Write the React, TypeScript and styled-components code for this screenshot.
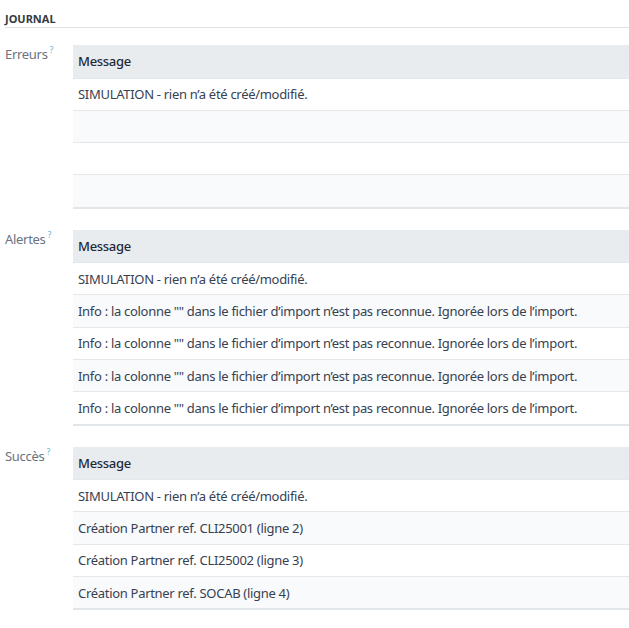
import React from "react";
import styled, { createGlobalStyle } from "styled-components";

const Global = createGlobalStyle`
  html, body {
    margin: 0;
    padding: 0;
    background: #ffffff;
  }
  body {
    font-family: "Noto Sans", "Liberation Sans", sans-serif;
    font-size: 13px;
    letter-spacing: -0.3px;
    color: #374151;
  }
`;

const Page = styled.div`
  padding: 12px 0 0 5px;
  width: 624px;
`;

const SectionTitle = styled.div`
  font-size: 11px;
  font-weight: 700;
  text-transform: uppercase;
  letter-spacing: 0;
  color: #343a40;
  line-height: 14px;
  padding-bottom: 1px;
  border-bottom: 1px solid #dee2e6;
  margin-bottom: 17px;
`;

const FieldRow = styled.div`
  display: grid;
  grid-template-columns: 68px 1fr;
  margin-bottom: 21px;
`;

const Label = styled.div`
  color: #6b7280;
  padding-top: 0;
  line-height: 18px;
`;

const Help = styled.sup`
  color: #5fb6d0;
  font-size: 9px;
  margin-left: 2px;
  vertical-align: 6px;
  line-height: 0;
`;

const Table = styled.table`
  width: 100%;
  border-collapse: collapse;
  border-bottom: 2px solid #e2e6ea;
`;

const HeadCell = styled.th`
  background: #e9ecef;
  height: 32.5px;
  padding: 0 5px;
  text-align: left;
  font-weight: 500;
  color: #1f2937;
`;

const Row = styled.tr`
  &:nth-child(even) td {
    background: #f9fafb;
  }
`;

const Cell = styled.td`
  height: 31.3px;
  padding: 0 5px;
  border-top: 1px solid #e5e7eb;
  color: #374151;
  white-space: nowrap;
`;

const SIM = "SIMULATION - rien n’a été créé/modifié.";
const INFO =
  "Info : la colonne \"\" dans le fichier d’import n’est pas reconnue. Ignorée lors de l’import.";

const sections: { label: string; rows: string[] }[] = [
  { label: "Erreurs", rows: [SIM, "", "", ""] },
  { label: "Alertes", rows: [SIM, INFO, INFO, INFO, INFO] },
  {
    label: "Succès",
    rows: [
      SIM,
      "Création Partner ref. CLI25001 (ligne 2)",
      "Création Partner ref. CLI25002 (ligne 3)",
      "Création Partner ref. SOCAB (ligne 4)",
    ],
  },
];

export default function App() {
  return (
    <>
      <Global />
      <Page>
        <SectionTitle>Journal</SectionTitle>
        {sections.map((s) => (
          <FieldRow key={s.label}>
            <Label>
              {s.label}
              <Help>?</Help>
            </Label>
            <Table>
              <thead>
                <tr>
                  <HeadCell>Message</HeadCell>
                </tr>
              </thead>
              <tbody>
                {s.rows.map((r, i) => (
                  <Row key={i}>
                    <Cell>{r}</Cell>
                  </Row>
                ))}
              </tbody>
            </Table>
          </FieldRow>
        ))}
      </Page>
    </>
  );
}
